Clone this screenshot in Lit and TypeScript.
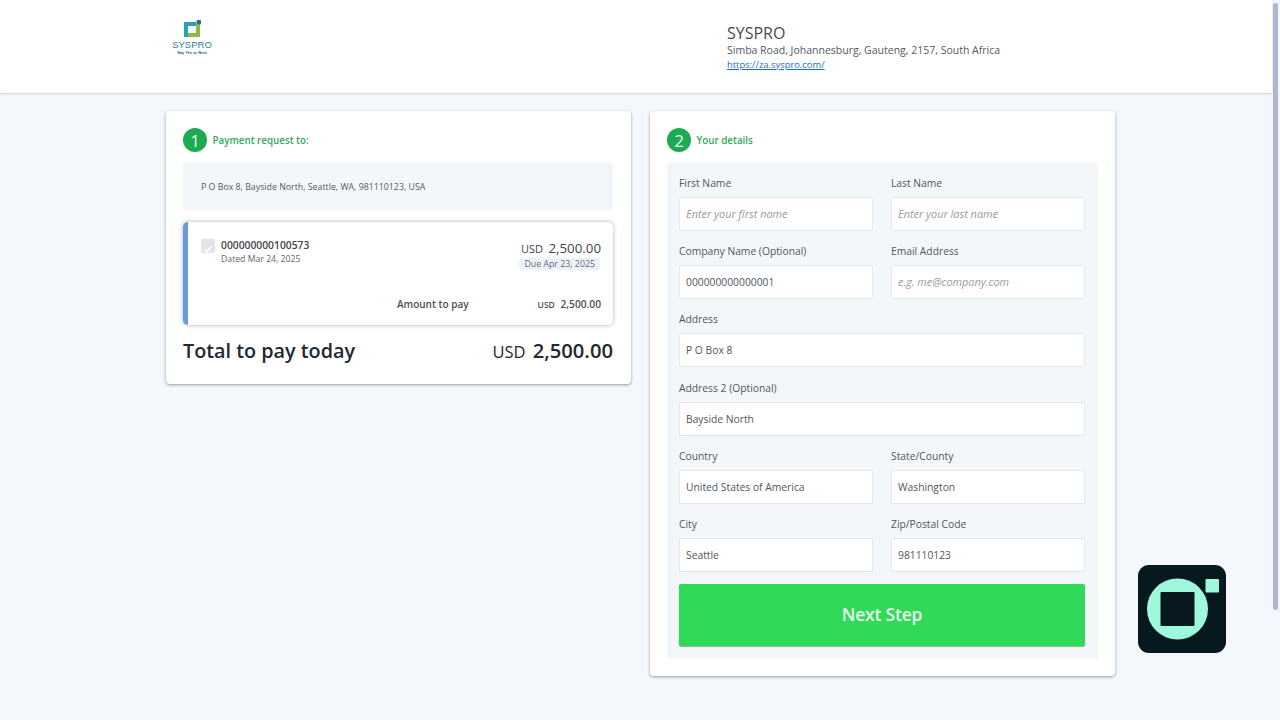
import { LitElement, html, css } from 'lit';
import { customElement } from 'lit/decorators.js';

interface Field {
  label: string;
  value?: string;
  placeholder?: string;
  wide?: boolean;
}

const FIELDS: Field[] = [
  { label: 'First Name', placeholder: 'Enter your first name' },
  { label: 'Last Name', placeholder: 'Enter your last name' },
  { label: 'Company Name (Optional)', value: '000000000000001' },
  { label: 'Email Address', placeholder: 'e.g. me@company.com' },
  { label: 'Address', value: 'P O Box 8', wide: true },
  { label: 'Address 2 (Optional)', value: 'Bayside North', wide: true },
  { label: 'Country', value: 'United States of America' },
  { label: 'State/County', value: 'Washington' },
  { label: 'City', value: 'Seattle' },
  { label: 'Zip/Postal Code', value: '981110123' },
];

@customElement('app-root')
export class AppRoot extends LitElement {
  static styles = css`
    :host {
      display: block;
      position: relative;
      height: 720px;
      overflow: hidden;
      background: #f4f7fb;
      color: #3f4650;
      font-family: 'Open Sans', 'Noto Sans', sans-serif;
    }

    .header {
      display: flex;
      height: 93px;
      box-sizing: border-box;
      width: 1272px;
      padding-left: 172px;
      background: #fff;
      box-shadow: 0 1px 2px rgba(70, 80, 100, 0.2);
    }

    .logo {
      display: flex;
      flex-direction: column;
      align-items: center;
      width: 40px;
      padding-top: 20px;
      color: #2f7f97;
    }

    .logo svg {
      display: block;
    }

    .logo-name {
      margin-top: 2px;
      font-family: 'Liberation Sans', sans-serif;
      font-size: 9.5px;
      line-height: 11px;
    }

    .logo-tag {
      font-family: 'Liberation Sans', sans-serif;
      font-size: 4px;
      line-height: 5px;
      font-weight: 700;
      color: #2b5f86;
    }

    .company {
      margin-left: 515px;
      padding-top: 24px;
    }

    .company-name {
      font-size: 16px;
      line-height: 18px;
      color: #454b54;
    }

    .company-address {
      font-size: 10.5px;
      line-height: 17px;
      color: #535a63;
    }

    .company a {
      display: block;
      font-size: 9.4px;
      line-height: 11px;
      color: #1f6fc0;
    }

    .main {
      display: flex;
      align-items: flex-start;
      gap: 19px;
      padding: 18px 0 0 166px;
    }

    .card {
      box-sizing: border-box;
      width: 465px;
      padding: 17px;
      background: #fff;
      border-radius: 4px;
      box-shadow: 0 1px 3px rgba(50, 60, 80, 0.5);
    }

    .card.left {
      padding-right: 18px;
    }

    .step {
      display: flex;
      align-items: center;
      gap: 5.500px;
      height: 24px;
      margin-bottom: 11px;
      font-size: 9.8px;
      font-weight: 600;
      color: #35a860;
    }

    .step-number {
      display: flex;
      align-items: center;
      justify-content: center;
      width: 24px;
      height: 24px;
      border-radius: 50%;
      background: #1cab50;
      color: #e8f8ee;
      font-size: 17px;
      font-weight: 400;
    }

    .bill-to {
      height: 47px;
      padding-left: 18px;
      display: flex;
      align-items: center;
      background: #f4f7fa;
      font-size: 8.8px;
      color: #525963;
    }

    .invoice {
      position: relative;
      box-sizing: border-box;
      height: 103px;
      margin-top: 12px;
      padding: 17px 12px 0 33px;
      border-left: 5px solid #6a9bdc;
      border-radius: 5px;
      background: #fff;
      box-shadow: 0 0 4px rgba(50, 60, 80, 0.4);
    }

    .invoice-top {
      display: flex;
      justify-content: space-between;
    }

    .check {
      position: absolute;
      left: 13px;
      top: 17px;
      width: 14px;
      height: 14px;
      border-radius: 2px;
      background: #e2e5e8;
    }

    .invoice-id {
      font-size: 10.3px;
      line-height: 13px;
      font-weight: 600;
      color: #40454e;
    }

    .invoice-date {
      margin-top: 1px;
      font-size: 8.7px;
      line-height: 13px;
      color: #60666f;
    }

    .amounts {
      display: flex;
      flex-direction: column;
      align-items: flex-end;
    }

    .amount {
      font-size: 13.3px;
      line-height: 19px;
      color: #3c424c;
    }

    .amount small {
      margin-right: 2px;
      font-size: 11px;
    }

    .due {
      height: 12px;
      margin-right: 1px;
      padding: 0 5px;
      border-radius: 2px;
      background: #eef0f8;
      font-size: 8.8px;
      line-height: 12px;
      color: #666c76;
    }

    .pay-row {
      display: flex;
      justify-content: space-between;
      align-items: center;
      margin: 27px 0 0 176px;
      font-size: 10px;
      font-weight: 600;
      color: #4a5059;
    }

    .pay-amount {
      font-size: 10.2px;
    }

    .pay-amount small {
      margin-right: 3px;
      font-size: 8.5px;
    }

    .total {
      display: flex;
      justify-content: space-between;
      align-items: center;
      margin-top: 11px;
      height: 28px;
      margin-bottom: 3px;
      color: #222831;
      font-size: 19.8px;
      font-weight: 600;
    }

    .total-amount {
      font-size: 20.2px;
      font-weight: 600;
    }

    .total-amount small {
      margin-right: 2px;
      font-size: 16.5px;
      font-weight: 400;
    }

    .details {
      box-sizing: border-box;
      height: 496px;
      padding: 12px 13px 12px 12px;
      background: #f4f7fa;
    }

    .grid {
      display: grid;
      grid-template-columns: 194px 194px;
      column-gap: 18px;
      row-gap: 12.2px;
    }

    .field.wide {
      grid-column: 1 / 3;
    }

    label {
      display: block;
      height: 22px;
      font-size: 10.3px;
      line-height: 16px;
      color: #50565f;
    }

    input {
      display: block;
      box-sizing: border-box;
      width: 100%;
      height: 34px;
      padding: 0 6px;
      border: 1px solid #e3e6ec;
      border-radius: 2px;
      background: #fff;
      font: 400 10.3px 'Open Sans', sans-serif;
      color: #50565f;
      outline: none;
    }

    input::placeholder {
      font-size: 10.9px;
      font-style: italic;
      color: #969ba3;
      opacity: 1;
    }

    .next {
      display: block;
      width: 100%;
      height: 62px;
      margin-top: 12.500px;
      padding: 0 0 2px;
      border: none;
      border-radius: 2px;
      background: #30da58;
      box-shadow: 0 1px 1px rgba(30, 110, 60, 0.5);
      color: #e8fbee;
      font: 600 17.5px 'Open Sans', sans-serif;
      letter-spacing: -0.2px;
    }

    .scrollbar {
      position: absolute;
      top: 3px;
      right: 2px;
      width: 5px;
      height: 607px;
      border-radius: 3px;
      background: #aeb6d2;
    }

    .widget {
      position: absolute;
      left: 1138px;
      top: 565px;
    }
  `;

  private renderField(f: Field) {
    return html`
      <div class="field ${f.wide ? 'wide' : ''}">
        <label>${f.label}</label>
        <input .value=${f.value ?? ''} placeholder=${f.placeholder ?? ''} />
      </div>
    `;
  }

  render() {
    return html`
      <header class="header">
        <div class="logo">
          <svg width="17" height="17" viewBox="0 0 17 17">
            <path d="M0 2h12v2.500h4V17H0z" fill="#2f9fb5" />
            <path d="M12 4.500h4V17H4v-4h8z" fill="#8dbb3e" />
            <path d="M4 6h8v7H4z" fill="#fff" />
            <rect x="12.500" y="0" width="4.500" height="4.500" rx="1" fill="#2c6f80" />
          </svg>
          <div class="logo-name">SYSPRO</div>
          <div class="logo-tag">Say Yes to Next</div>
        </div>
        <div class="company">
          <div class="company-name">SYSPRO</div>
          <div class="company-address">Simba Road, Johannesburg, Gauteng, 2157, South Africa</div>
          <a href="#">https://za.syspro.com/</a>
        </div>
      </header>

      <main class="main">
        <section class="card left">
          <div class="step"><span class="step-number">1</span>Payment request to:</div>
          <div class="bill-to">P O Box 8, Bayside North, Seattle, WA, 981110123, USA</div>
          <div class="invoice">
            <div class="check">
              <svg width="14" height="14" viewBox="0 0 14 14">
                <path d="M3.500 7.200l2.400 2.400 4.600-5" fill="none" stroke="#fff" stroke-width="1.500" />
              </svg>
            </div>
            <div class="invoice-top">
              <div>
                <div class="invoice-id">000000000100573</div>
                <div class="invoice-date">Dated Mar 24, 2025</div>
              </div>
              <div class="amounts">
                <div class="amount"><small>USD</small> 2,500.00</div>
                <div class="due">Due Apr 23, 2025</div>
              </div>
            </div>
            <div class="pay-row">
              <span>Amount to pay</span>
              <span class="pay-amount"><small>USD</small> 2,500.00</span>
            </div>
          </div>
          <div class="total">
            <span>Total to pay today</span>
            <span class="total-amount"><small>USD</small> 2,500.00</span>
          </div>
        </section>

        <section class="card">
          <div class="step"><span class="step-number">2</span>Your details</div>
          <div class="details">
            <div class="grid">${FIELDS.map((f) => this.renderField(f))}</div>
            <button class="next" type="button">Next Step</button>
          </div>
        </section>
      </main>

      <div class="scrollbar"></div>
      <svg class="widget" width="88" height="88" viewBox="0 0 88 88">
        <rect width="88" height="88" rx="11" fill="#07191f" />
        <circle cx="39.500" cy="44" r="30.500" fill="#a0f8dc" />
        <rect x="22.500" y="27" width="34" height="34" rx="1" fill="#07191f" />
        <rect x="67.500" y="14" width="13.500" height="13.500" rx="1" fill="#a0f8dc" />
      </svg>
    `;
  }
}

declare global {
  interface HTMLElementTagNameMap {
    'app-root': AppRoot;
  }
}
